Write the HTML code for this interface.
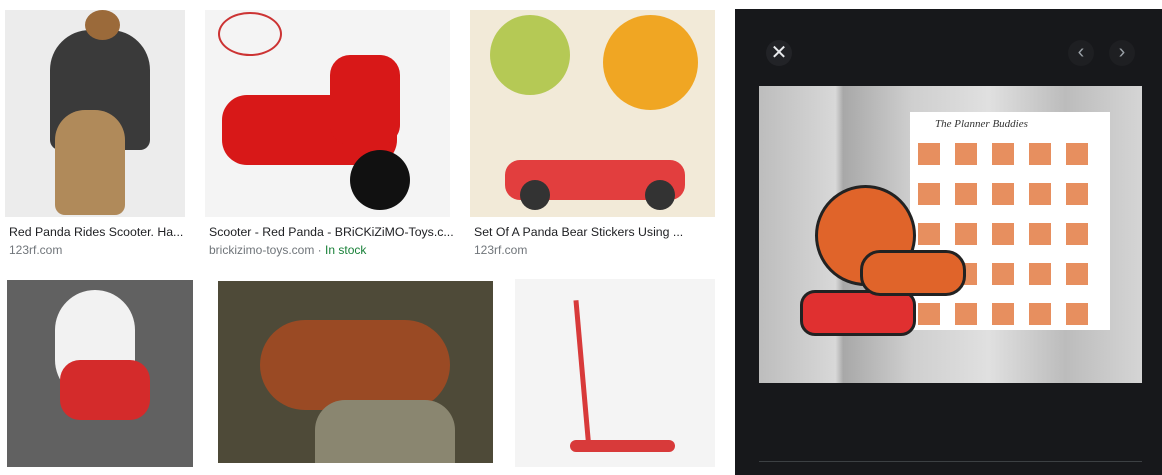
<!DOCTYPE html>
<html><head><style>
body{margin:0;width:1162px;height:475px;background:#fff;position:relative;overflow:hidden;font-family:"Liberation Sans",Arial,sans-serif}
.a{position:absolute}
.cap{position:absolute;font-size:12.3px;color:#202124;white-space:nowrap}
.src{position:absolute;font-size:12px;color:#70757a;white-space:nowrap}
</style></head><body>
<div class="a" style="left:5px;top:10px;width:180px;height:207px;background:#ececec"></div>
<div class="a" style="left:50px;top:30px;width:100px;height:120px;background:#3a3a3a;border-radius:40px 40px 10px 10px"></div>
<div class="a" style="left:55px;top:110px;width:70px;height:105px;background:#b08a5a;border-radius:30px 30px 10px 10px"></div>
<div class="a" style="left:85px;top:10px;width:35px;height:30px;background:#9b6a3a;border-radius:50%"></div>

<div class="a" style="left:205px;top:10px;width:245px;height:207px;background:#f4f4f4"></div>
<div class="a" style="left:222px;top:95px;width:175px;height:70px;background:#d81818;border-radius:25px"></div>
<div class="a" style="left:330px;top:55px;width:70px;height:90px;background:#d81818;border-radius:20px"></div>
<div class="a" style="left:350px;top:150px;width:60px;height:60px;background:#111;border-radius:50%"></div>
<div class="a" style="left:218px;top:12px;width:60px;height:40px;border:2px solid #c33;border-radius:50%"></div>

<div class="a" style="left:470px;top:10px;width:245px;height:207px;background:#f2ead8"></div>
<div class="a" style="left:490px;top:15px;width:80px;height:80px;background:#b5c955;border-radius:50%"></div>
<div class="a" style="left:603px;top:15px;width:95px;height:95px;background:#f0a623;border-radius:50%"></div>
<div class="a" style="left:505px;top:160px;width:180px;height:40px;background:#e23e3e;border-radius:15px"></div>
<div class="a" style="left:520px;top:180px;width:30px;height:30px;background:#333;border-radius:50%"></div>
<div class="a" style="left:645px;top:180px;width:30px;height:30px;background:#333;border-radius:50%"></div>

<div class="cap" style="left:9px;top:225px">Red Panda Rides Scooter. Ha...</div>
<div class="src" style="left:9px;top:243px">123rf.com</div>
<div class="cap" style="left:209px;top:225px">Scooter - Red Panda - BRiCKiZiMO-Toys.c...</div>
<div class="src" style="left:209px;top:243px">brickizimo-toys.com · <span style="color:#188038">In stock</span></div>
<div class="cap" style="left:474px;top:225px">Set Of A Panda Bear Stickers Using ...</div>
<div class="src" style="left:474px;top:243px">123rf.com</div>

<div class="a" style="left:7px;top:280px;width:186px;height:187px;background:#616161"></div>
<div class="a" style="left:55px;top:290px;width:80px;height:110px;background:#f2f2f2;border-radius:40px"></div>
<div class="a" style="left:60px;top:360px;width:90px;height:60px;background:#d42b2b;border-radius:20px"></div>

<div class="a" style="left:218px;top:281px;width:275px;height:182px;background:#4e4a38"></div>
<div class="a" style="left:260px;top:320px;width:190px;height:90px;background:#9a4a24;border-radius:45px"></div>
<div class="a" style="left:315px;top:400px;width:140px;height:63px;background:#8a8670;border-radius:30px 30px 0 0"></div>

<div class="a" style="left:515px;top:279px;width:200px;height:188px;background:#f4f4f4"></div>
<div class="a" style="left:580px;top:300px;width:5px;height:150px;background:#d83a3a;transform:rotate(-5deg)"></div>
<div class="a" style="left:570px;top:440px;width:105px;height:12px;background:#d83a3a;border-radius:6px"></div>

<div class="a" style="left:735px;top:9px;width:427px;height:466px;background:#17181b"></div>
<div class="a" style="left:766px;top:40px;width:26px;height:26px;border-radius:50%;background:#222327;color:#e8eaed;font-size:20px;line-height:26px;text-align:center">✕</div>
<div class="a" style="left:1068px;top:40px;width:26px;height:26px;border-radius:50%;background:#1e1f22;color:#9aa0a6;font-size:20px;line-height:24px;text-align:center">‹</div>
<div class="a" style="left:1109px;top:40px;width:26px;height:26px;border-radius:50%;background:#1e1f22;color:#9aa0a6;font-size:20px;line-height:24px;text-align:center">›</div>
<div class="a" style="left:759px;top:86px;width:383px;height:297px;background:linear-gradient(90deg,#bdbdbd,#d8d8d8 20%,#a8a8a8 22%,#cfcfcf 40%,#e0e0e0 60%,#bcbcbc 80%,#d5d5d5)"></div>
<div class="a" style="left:910px;top:112px;width:200px;height:218px;background:#fff"></div>
<div class="a" style="left:935px;top:118px;font-size:11px;color:#333;font-family:'Liberation Serif',serif;font-style:italic">The Planner Buddies</div>
<div class="a" style="left:918px;top:135px;width:185px;height:190px;background:repeating-linear-gradient(90deg,#e06a2a 0 22px,#fff 22px 37px);opacity:.75;-webkit-mask:repeating-linear-gradient(0deg,#000 0 22px,transparent 22px 40px)"></div>
<div class="a" style="left:815px;top:185px;width:95px;height:95px;background:#e0642a;border-radius:50%;border:3px solid #222"></div>
<div class="a" style="left:800px;top:290px;width:110px;height:40px;background:#e03030;border-radius:15px;border:3px solid #222"></div>
<div class="a" style="left:860px;top:250px;width:100px;height:40px;background:#e0642a;border-radius:20px;border:3px solid #222"></div>
<div class="a" style="left:759px;top:461px;width:383px;height:1px;background:#3c4043"></div>
</body></html>
